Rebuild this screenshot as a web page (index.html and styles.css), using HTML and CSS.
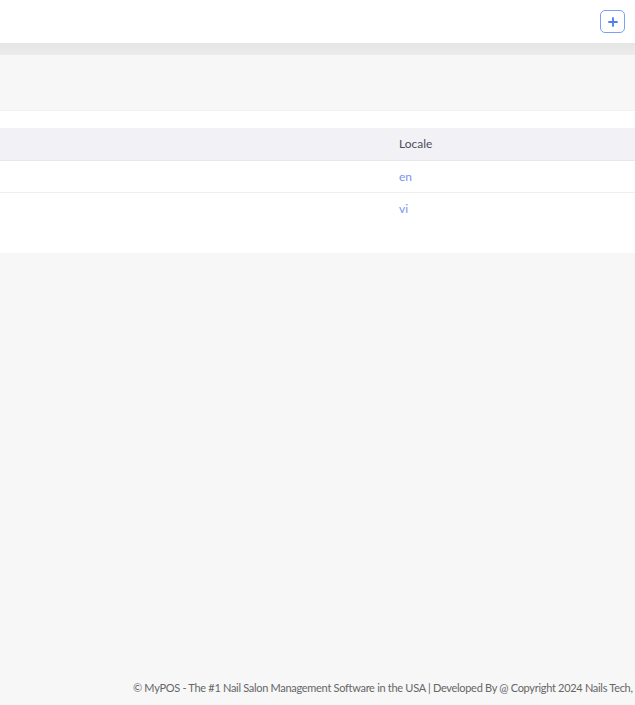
FILE: index.html
```html
<!DOCTYPE html>
<html lang="en">
<head>
<meta charset="UTF-8" />
<meta name="viewport" content="width=device-width, initial-scale=1"/>
<title>Locales - MyPOS</title>
<link rel="stylesheet" href="styles.css">
</head>
<body>
<div id="page">
  <header class="topbar">
    <button class="add-btn" aria-label="Add locale">
      <svg width="10" height="10" viewBox="0 0 10 10" aria-hidden="true">
        <path d="M5 1v8M1 5h8" stroke="#4f7df5" stroke-width="1.8" stroke-linecap="round"/>
      </svg>
    </button>
  </header>
  <div class="toolbar-shadow"></div>
  <div class="filters"></div>

  <section class="card">
    <table class="locale-table">
      <thead>
        <tr><th class="col-blank"></th><th>Locale</th></tr>
      </thead>
      <tbody>
        <tr><td></td><td><a href="#">en</a></td></tr>
        <tr><td></td><td><a href="#">vi</a></td></tr>
      </tbody>
    </table>
  </section>

  <footer class="footer">
    <p>© MyPOS - The #1 Nail Salon Management Software in the USA | Developed By @ Copyright 2024 Nails Tech,</p>
  </footer>
</div>
</body>
</html>
```

FILE: styles.css
```css
/* Reset & base */
* {
  box-sizing: border-box;
}
body, html {
  margin: 0; padding: 0;
  width: 100%;
  height: 100%;
  font-family: Lato, 'Open Sans', sans-serif;
  background: #f7f7f7;
  color: #333;
  overflow: hidden;
}
#page {
  height: 100vh;
  display: flex;
  flex-direction: column;
}
.topbar {
  height: 43px;
  background: #fff;
  display: flex;
  justify-content: flex-end;
  align-items: flex-start;
  padding: 10px 10px 0 0;
}
.add-btn {
  width: 25px;
  height: 23px;
  padding: 0;
  border: 1px solid #7c9ff7;
  border-radius: 5px;
  background: #fff;
  display: flex;
  align-items: center;
  justify-content: center;
  cursor: pointer;
}
.toolbar-shadow {
  height: 12px;
  background: linear-gradient(#e6e6e6, #ececec);
}
.filters {
  height: 56px;
  background: #f7f7f7;
  border-bottom: 1px solid #f2f2f2;
}
.card {
  background: #fff;
  padding: 17px 0 29px 0;
}
.locale-table {
  width: 100%;
  border-collapse: collapse;
  font-size: 12px;
}
.locale-table th {
  background: #f2f2f6;
  color: #4d4d5c;
  font-weight: 400;
  text-align: left;
  height: 32px;
  padding: 0;
  border-bottom: 1px solid #e6e6ec;
}
.locale-table th.col-blank {
  width: 399px;
}
.locale-table td {
  height: 32px;
  padding: 0;
  border-bottom: 1px solid #efefef;
}
.locale-table tbody tr:last-child td {
  border-bottom: none;
}
.locale-table a {
  color: #7b94f0;
  text-decoration: none;
}
.footer {
  margin-top: auto;
  height: 26px;
  overflow: hidden;
}
.footer p {
  margin: 0;
  padding-left: 133px;
  white-space: nowrap;
  font-size: 11px;
  letter-spacing: -0.3px;
  color: #666;
  line-height: 18px;
}
```
